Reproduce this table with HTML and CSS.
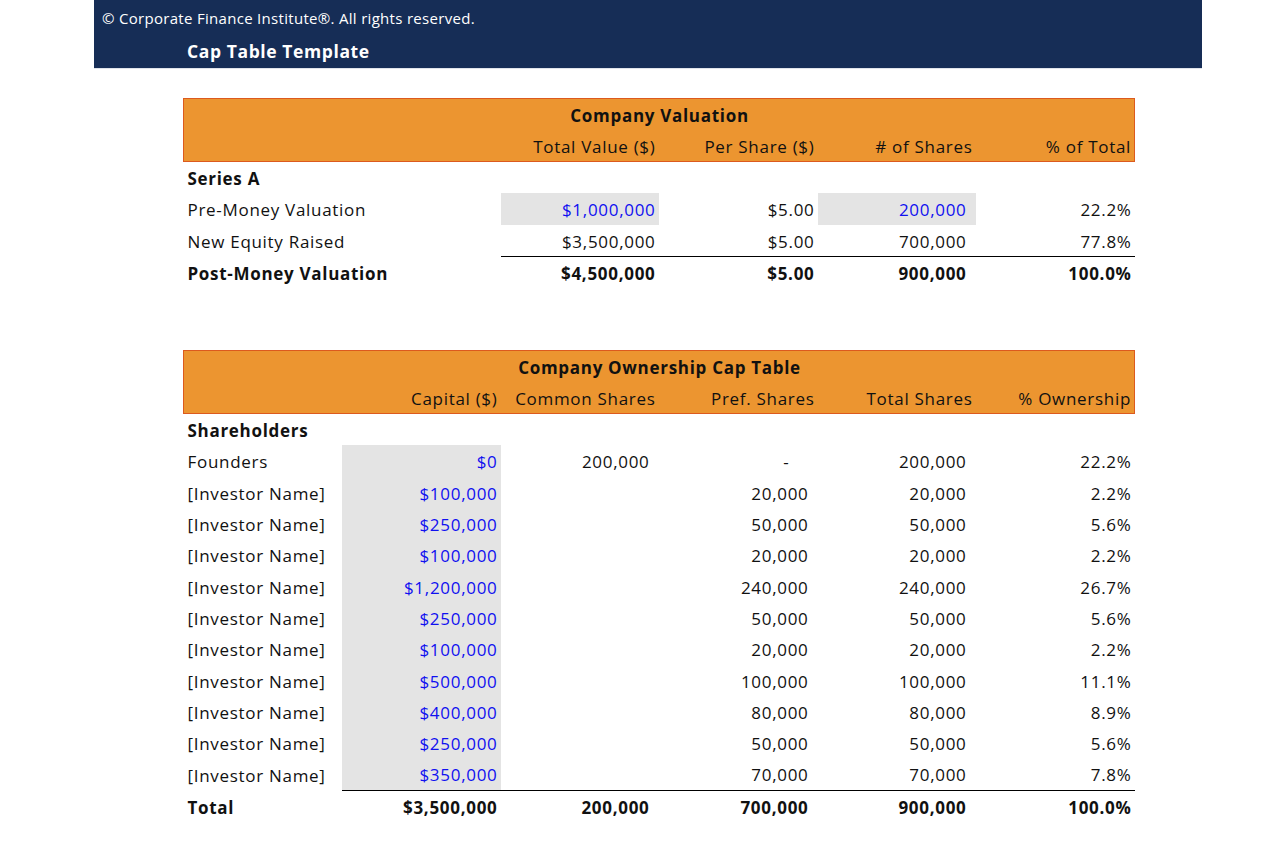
FILE: index.html
```html
<!DOCTYPE html>
<html lang="en">
<head>
  <meta charset="UTF-8">
  <title>Cap Table Template</title>
  <link rel="stylesheet" href="styles.css">
</head>
<body>

  <!-- Sheet header -->
  <header class="sheet-head">
    <p class="copyright">© Corporate Finance Institute®. All rights reserved.</p>
    <h1 class="title">Cap Table Template</h1>
  </header>

  <main class="sheet">

    <!-- Company Valuation -->
    <table class="grid">
      <colgroup>
        <col class="c1"><col class="c2"><col class="c3"><col class="c4"><col class="c5"><col class="c6">
      </colgroup>
      <thead>
        <tr class="band band-top">
          <th colspan="6" class="band-title">Company Valuation</th>
        </tr>
        <tr class="band band-sub">
          <th></th>
          <th></th>
          <th class="num">Total Value ($)</th>
          <th class="num">Per Share ($)</th>
          <th class="num"># of Shares</th>
          <th class="num">% of Total</th>
        </tr>
      </thead>
      <tbody>
        <tr>
          <td colspan="2" class="bold">Series A</td>
          <td></td><td></td><td></td><td></td>
        </tr>
        <tr>
          <td colspan="2">Pre-Money Valuation</td>
          <td class="num input">$1,000,000</td>
          <td class="num">$5.00</td>
          <td class="num shares input">200,000</td>
          <td class="num">22.2%</td>
        </tr>
        <tr>
          <td colspan="2">New Equity Raised</td>
          <td class="num">$3,500,000</td>
          <td class="num">$5.00</td>
          <td class="num shares">700,000</td>
          <td class="num">77.8%</td>
        </tr>
        <tr class="total">
          <td colspan="2" class="bold">Post-Money Valuation</td>
          <td class="num line">$4,500,000</td>
          <td class="num line">$5.00</td>
          <td class="num shares line">900,000</td>
          <td class="num line">100.0%</td>
        </tr>
      </tbody>
    </table>

    <!-- Company Ownership Cap Table -->
    <table class="grid ownership">
      <colgroup>
        <col class="c1"><col class="c2"><col class="c3"><col class="c4"><col class="c5"><col class="c6">
      </colgroup>
      <thead>
        <tr class="band band-top">
          <th colspan="6" class="band-title">Company Ownership Cap Table</th>
        </tr>
        <tr class="band band-sub">
          <th></th>
          <th class="num">Capital ($)</th>
          <th class="num">Common Shares</th>
          <th class="num">Pref. Shares</th>
          <th class="num">Total Shares</th>
          <th class="num">% Ownership</th>
        </tr>
      </thead>
      <tbody>
        <tr>
          <td class="bold">Shareholders</td>
          <td></td><td></td><td></td><td></td><td></td>
        </tr>
        <tr>
          <td>Founders</td>
          <td class="num input">$0</td>
          <td class="num shares">200,000</td>
          <td class="num dash">-</td>
          <td class="num shares">200,000</td>
          <td class="num">22.2%</td>
        </tr>
        <tr>
          <td>[Investor Name]</td>
          <td class="num input">$100,000</td>
          <td></td>
          <td class="num shares">20,000</td>
          <td class="num shares">20,000</td>
          <td class="num">2.2%</td>
        </tr>
        <tr>
          <td>[Investor Name]</td>
          <td class="num input">$250,000</td>
          <td></td>
          <td class="num shares">50,000</td>
          <td class="num shares">50,000</td>
          <td class="num">5.6%</td>
        </tr>
        <tr>
          <td>[Investor Name]</td>
          <td class="num input">$100,000</td>
          <td></td>
          <td class="num shares">20,000</td>
          <td class="num shares">20,000</td>
          <td class="num">2.2%</td>
        </tr>
        <tr>
          <td>[Investor Name]</td>
          <td class="num input">$1,200,000</td>
          <td></td>
          <td class="num shares">240,000</td>
          <td class="num shares">240,000</td>
          <td class="num">26.7%</td>
        </tr>
        <tr>
          <td>[Investor Name]</td>
          <td class="num input">$250,000</td>
          <td></td>
          <td class="num shares">50,000</td>
          <td class="num shares">50,000</td>
          <td class="num">5.6%</td>
        </tr>
        <tr>
          <td>[Investor Name]</td>
          <td class="num input">$100,000</td>
          <td></td>
          <td class="num shares">20,000</td>
          <td class="num shares">20,000</td>
          <td class="num">2.2%</td>
        </tr>
        <tr>
          <td>[Investor Name]</td>
          <td class="num input">$500,000</td>
          <td></td>
          <td class="num shares">100,000</td>
          <td class="num shares">100,000</td>
          <td class="num">11.1%</td>
        </tr>
        <tr>
          <td>[Investor Name]</td>
          <td class="num input">$400,000</td>
          <td></td>
          <td class="num shares">80,000</td>
          <td class="num shares">80,000</td>
          <td class="num">8.9%</td>
        </tr>
        <tr>
          <td>[Investor Name]</td>
          <td class="num input">$250,000</td>
          <td></td>
          <td class="num shares">50,000</td>
          <td class="num shares">50,000</td>
          <td class="num">5.6%</td>
        </tr>
        <tr>
          <td>[Investor Name]</td>
          <td class="num input">$350,000</td>
          <td></td>
          <td class="num shares">70,000</td>
          <td class="num shares">70,000</td>
          <td class="num">7.8%</td>
        </tr>
        <tr class="total">
          <td class="bold">Total</td>
          <td class="num line">$3,500,000</td>
          <td class="num shares line">200,000</td>
          <td class="num shares line">700,000</td>
          <td class="num shares line">900,000</td>
          <td class="num line">100.0%</td>
        </tr>
      </tbody>
    </table>

  </main>

</body>
</html>
```

FILE: styles.css
```css
/* General Reset */
* {
  margin: 0;
  padding: 0;
  box-sizing: border-box;
}

body {
  font-family: 'Open Sans', 'Liberation Sans', sans-serif;
  color: #111;
  background: #fff;
}

/* Sheet header */
.sheet-head {
  margin-left: 94px;
  width: 1108px;
  height: 69px;
  background: #162d56;
  border-bottom: 1px solid #dfe3ea;
  color: #fff;
  padding-top: 8px;
}

.copyright {
  font-size: 15px;
  line-height: 20px;
  padding-left: 8px;
  letter-spacing: 0.3px;
}

.title {
  font-size: 17.5px;
  font-weight: 700;
  line-height: 24px;
  margin-top: 11px;
  padding-left: 93px;
  letter-spacing: 0.6px;
}

/* Tables */
.sheet {
  padding-left: 183px;
  padding-top: 29px;
}

.grid {
  width: 951px;
  table-layout: fixed;
  border-collapse: collapse;
  font-size: 17px;
  letter-spacing: 0.7px;
}

.ownership {
  margin-top: 62px;
}

.c1, .c3, .c5 { width: 158px; }
.c2, .c4, .c6 { width: 159px; }

th, td {
  font-weight: 400;
  text-align: left;
  white-space: nowrap;
  padding: 3px 3px 0 4px;
  line-height: 28.3px;
  vertical-align: middle;
}

.band th {
  background: #ec9530;
  padding-top: 3px;
  line-height: 28px;
  color: #111;
}

.band-top th {
  border-top: 1px solid #dc5a1e;
}

.band-sub th {
  border-bottom: 1px solid #dc5a1e;
}

.band th:first-child { border-left: 1px solid #dc5a1e; }
.band th:last-child { border-right: 1px solid #dc5a1e; }

.band-title {
  text-align: center !important;
  font-weight: 700 !important;
}

.num {
  text-align: right !important;
}

.shares {
  padding-right: 9px;
}

.dash {
  padding-right: 28px;
}

.bold {
  font-weight: 700;
}

.total td {
  font-weight: 700;
}

.line {
  border-top: 1px solid #000;
}

.input {
  background: #e4e4e4;
  color: #1010f0;
}
```
